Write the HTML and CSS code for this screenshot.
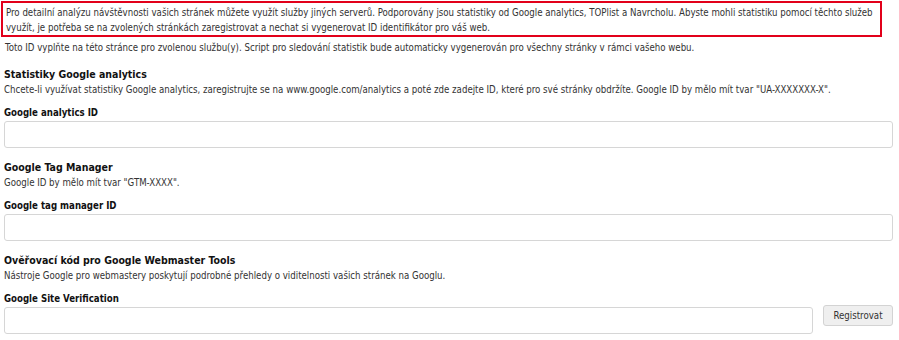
FILE: index.html
```html
<!DOCTYPE html>
<html lang="cs">
<head>
<meta charset="utf-8">
<link rel="stylesheet" href="styles.css">
</head>
<body>
<div class="page">
  <div class="notice">Pro detailní analýzu návštěvnosti vašich stránek můžete využít služby jiných serverů. Podporovány jsou statistiky od Google analytics, TOPlist a Navrcholu. Abyste mohli statistiku pomocí těchto služeb využít, je potřeba se na zvolených stránkách zaregistrovat a nechat si vygenerovat ID identifikátor pro váš web.</div>
  <p class="intro">Toto ID vyplňte na této stránce pro zvolenou službu(y). Script pro sledování statistik bude automaticky vygenerován pro všechny stránky v rámci vašeho webu.</p>

  <section class="group">
    <h2 class="title">Statistiky Google analytics</h2>
    <p class="desc">Chcete-li využívat statistiky Google analytics, zaregistrujte se na www.google.com/analytics a poté zde zadejte ID, které pro své stránky obdržíte. Google ID by mělo mít tvar "UA-XXXXXXX-X".</p>
    <label class="label">Google analytics ID</label>
    <div class="row"><input class="field" type="text"></div>
  </section>

  <section class="group">
    <h2 class="title">Google Tag Manager</h2>
    <p class="desc">Google ID by mělo mít tvar "GTM-XXXX".</p>
    <label class="label">Google tag manager ID</label>
    <div class="row"><input class="field" type="text"></div>
  </section>

  <section class="group">
    <h2 class="title">Ověřovací kód pro Google Webmaster Tools</h2>
    <p class="desc">Nástroje Google pro webmastery poskytují podrobné přehledy o viditelnosti vašich stránek na Googlu.</p>
    <label class="label">Google Site Verification</label>
    <div class="row"><input class="field" type="text"><button class="btn" type="button">Registrovat</button></div>
  </section>
</div>
</body>
</html>
```
FILE: styles.css
```css
html, body {
  margin: 0;
  padding: 0;
  background: #fff;
}
body {
  font-family: "DejaVu Sans Condensed", "DejaVu Sans", Verdana, sans-serif;
  font-size: 9.6px;
  color: #333;
  line-height: 15px;
}
.page {
  padding: 1px 6px 0 4px;
}
.notice {
  width: 874px;
  margin-left: -3px;
  border: 2px solid #e2001a;
  padding: 2px 0 0 3px;
}
.intro {
  margin: 3px 0 0 1px;
}
.group {
  margin-top: 12px;
}
.title {
  margin: 0;
  font-size: 10.5px;
  font-weight: bold;
  line-height: 15px;
  color: #111;
}
.desc {
  margin: 0;
}
.label {
  display: block;
  margin-top: 8px;
  font-weight: bold;
  color: #111;
}
.row {
  display: flex;
  align-items: flex-start;
  gap: 10px;
  margin-top: 1px;
}
.field {
  flex: 1;
  height: 27px;
  box-sizing: border-box;
  border: 1px solid #d6d6d6;
  border-radius: 3px;
  margin: 0;
  padding: 0 6px;
}
.btn {
  font-family: "DejaVu Sans Condensed", "DejaVu Sans", Verdana, sans-serif;
  font-size: 9.6px;
  color: #333;
  background: #efefef;
  border: 1px solid #d3d3d3;
  border-radius: 3px;
  height: 21px;
  width: 70px;
  padding: 0;
  margin-top: -2px;
}
```
